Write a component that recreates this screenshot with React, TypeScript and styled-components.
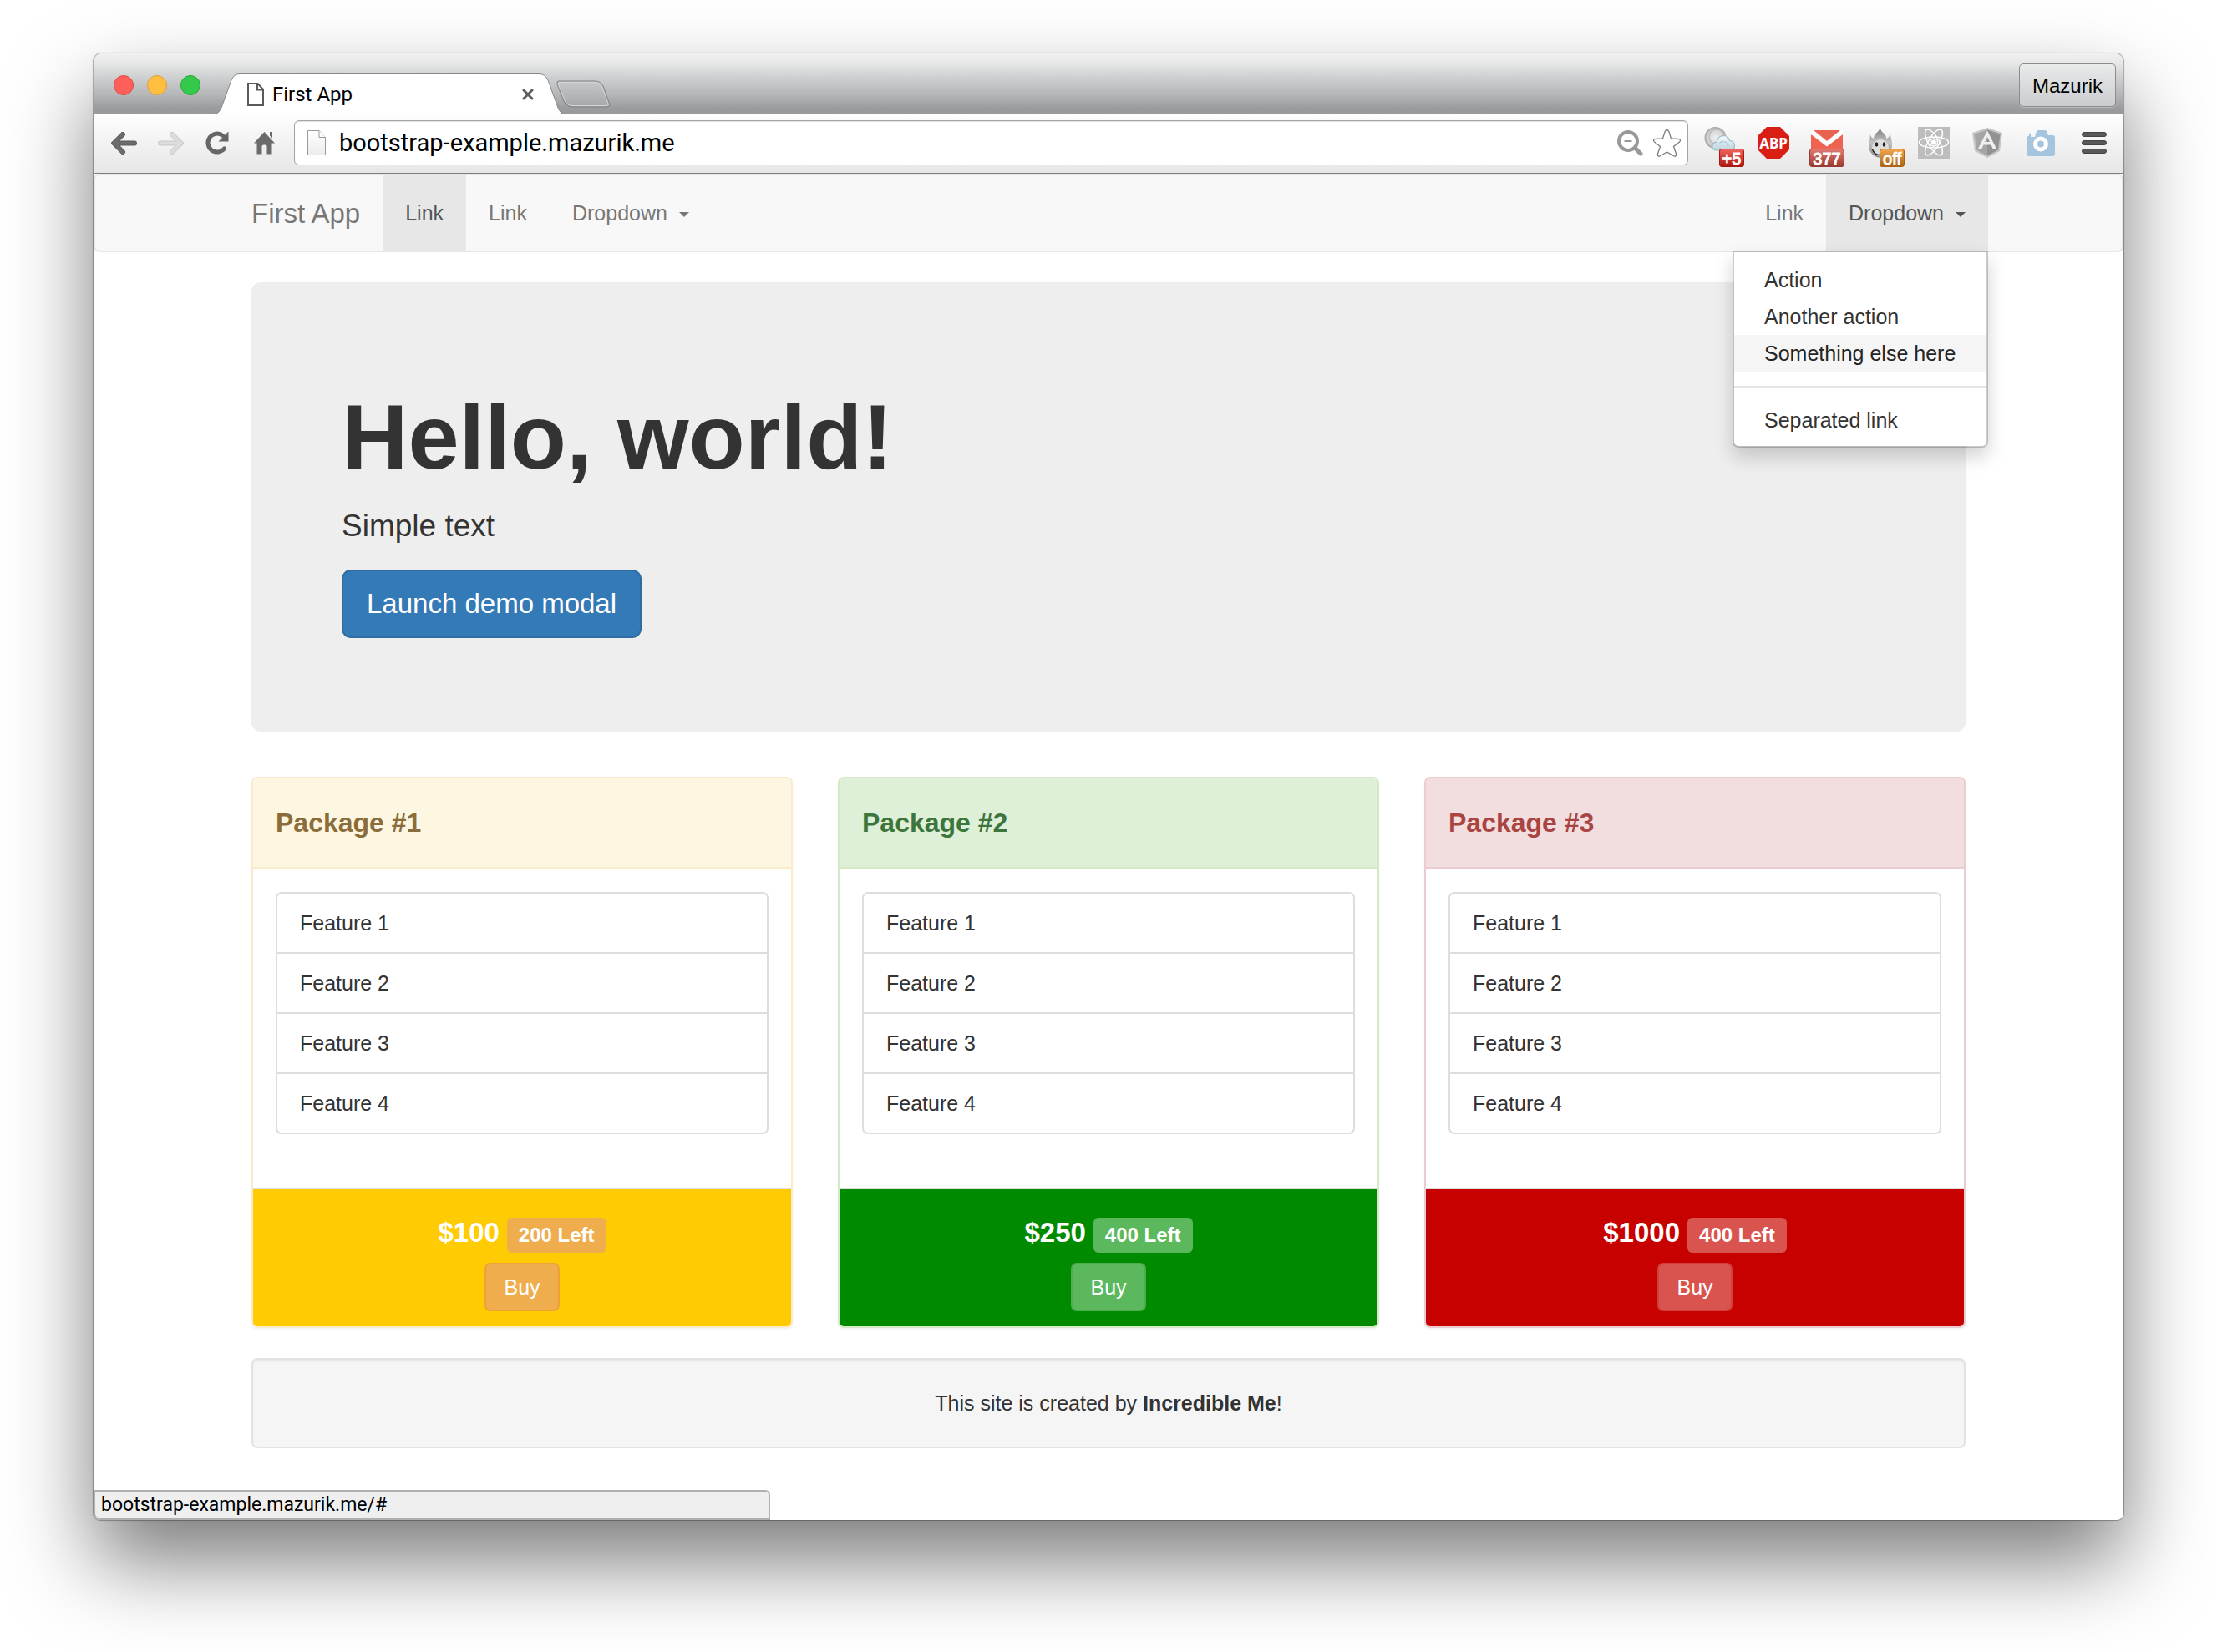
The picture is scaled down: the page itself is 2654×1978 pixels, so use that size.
import React from 'react';
import styled, { createGlobalStyle } from 'styled-components';

const uiFont = 'Roboto, "Noto Sans", sans-serif';
const pageFont = '"Liberation Sans", Arial, sans-serif';

const GlobalStyle = createGlobalStyle`
  *, *::before, *::after { box-sizing: border-box; }
  body { margin: 0; background: #fff; font-family: ${pageFont}; font-size: 25px; line-height: 36px; color: #333; }
  button, input { font: inherit; color: inherit; margin: 0; padding: 0; border: 0; background: none; }
  a { color: inherit; text-decoration: none; }
  ul { list-style: none; margin: 0; padding: 0; }
  svg { display: block; flex: none; }
`;

/* ---------- browser window ---------- */

const Desktop = styled.div`
  display: flex;
  min-height: 100vh;
  padding: 64px 112px 160px;
`;

const Window = styled.div`
  position: relative;
  display: flex;
  flex-direction: column;
  flex: 1;
  min-width: 0;
  border-radius: 10px 10px 8px 8px;
  background: #fff;
  box-shadow: 0 0 1px 1px rgba(0, 0, 0, 0.3), 0 50px 100px rgba(0, 0, 0, 0.52);
`;

const TabStrip = styled.div`
  display: flex;
  align-items: flex-end;
  height: 73px;
  padding: 0 9px 0 24px;
  border-radius: 10px 10px 0 0;
  background: linear-gradient(#f0f0f0 0, #e6e7e7 12px, #c9cbcc 32px, #b4b5b7 50px, #999b9d 66px, #98999b 100%);
`;

const Lights = styled.div`
  display: flex;
  gap: 16px;
  margin: 0 17px 23px 0;
`;

const Light = styled.button<{ $fill: string; $edge: string }>`
  width: 24px;
  height: 24px;
  border: 1px solid ${(p) => p.$edge};
  border-radius: 50%;
  background: ${(p) => p.$fill};
`;

const Tab = styled.div`
  position: relative;
  display: flex;
  align-items: center;
  width: 418px;
  height: 49px;
  padding: 0 36px 0 39px;
  gap: 10px;
  font: 24px/30px ${uiFont};
  color: #000;
`;

const TabShape = styled.svg`
  position: absolute;
  inset: 0;
`;

const TabTitle = styled.span`
  position: relative;
  flex: 1;
`;

const TabPart = styled.span`
  position: relative;
`;

const CloseButton = styled.button`
  position: relative;
`;

const NewTab = styled.button`
  margin: 0 0 8px -9px;
`;

const Profile = styled.button`
  height: 52px;
  margin: 0 0 9px auto;
  padding: 2px 15px 0;
  border: 1px solid #8a8c8e;
  border-radius: 5px;
  background: linear-gradient(#e9eaea, #cbcccf);
  box-shadow: 0 1px 0 rgba(255, 255, 255, 0.3);
  color: #000;
  font-size: 24px;
`;

const Toolbar = styled.div`
  display: flex;
  align-items: center;
  height: 71px;
  padding: 0 20px 2px 8px;
  border-bottom: 1px solid #7c7e80;
  background: linear-gradient(#fefefe, #e6e6e6);
`;

const NavButtons = styled.div`
  display: flex;
  align-items: center;
  margin-right: 8px;
`;

const NavButton = styled.button`
  display: flex;
  justify-content: center;
  width: 56px;
`;

const AddressBar = styled.form`
  display: flex;
  align-items: center;
  flex: 1;
  min-width: 0;
  height: 54px;
  padding: 0 7px 0 15px;
  gap: 11px;
  border: 1px solid #a2a4a6;
  border-radius: 6px;
  background: #fff;
  box-shadow: inset 0 1px 1px rgba(0, 0, 0, 0.12);
`;

const AddressInput = styled.input`
  flex: 1;
  min-width: 0;
  height: 40px;
  padding-left: 5px;
  font: 29px/40px ${uiFont};
  color: #000;
  outline: none;
`;

const Extensions = styled.div`
  display: flex;
  gap: 26px;
  margin: 0 30px 0 19px;
`;

const Extension = styled.button`
  position: relative;
  width: 38px;
  height: 38px;
`;

const Badge = styled.span<{ $wide?: boolean; $top: string; $bottom: string }>`
  position: absolute;
  right: ${(p) => (p.$wide ? '-2px' : '-10px')};
  bottom: -10px;
  width: ${(p) => (p.$wide ? '42px' : '30px')};
  height: 22px;
  border: 1px solid ${(p) => p.$bottom};
  border-radius: 3px;
  background: linear-gradient(${(p) => p.$top}, ${(p) => p.$bottom});
  color: #fff;
  font-size: 20px;
  line-height: 22px;
  text-align: center;
  -webkit-text-stroke: 1px #fff;
`;

const StatusBubble = styled.div`
  position: absolute;
  left: 0;
  bottom: 0;
  width: 810px;
  max-width: 100%;
  height: 36px;
  padding: 0 7px;
  border: 2px solid #b0b0b0;
  border-radius: 0 6px 0 8px;
  background: #efefef;
  font: 23px/32px ${uiFont};
  color: #000;
`;

/* ---------- site ---------- */

const Page = styled.div`
  flex: 1;
  padding-bottom: 86px;
`;

const Container = styled.div`
  max-width: 2106px;
  margin: 0 auto;
  padding: 0 27px;
`;

const Navbar = styled.nav`
  margin-bottom: 36px;
  border: 2px solid #e7e7e7;
  border-radius: 7px;
  background: #f8f8f8;
`;

const NavInner = styled.div`
  display: flex;
  max-width: 2106px;
  margin: 0 auto;
`;

const Brand = styled.a`
  padding: 28px 27px 26px;
  font-size: 33px;
  color: #777;
`;

const NavList = styled.ul<{ $right?: boolean }>`
  display: flex;
  margin-left: ${(p) => (p.$right ? 'auto' : '0')};
`;

const NavItem = styled.li`
  position: relative;
`;

const NavLink = styled.a<{ $active?: boolean }>`
  display: flex;
  align-items: center;
  padding: 27px;
  color: ${(p) => (p.$active ? '#555' : '#777')};
  background: ${(p) => (p.$active ? '#e7e7e7' : 'transparent')};
`;

const Caret = styled.span`
  margin: 4px 0 0 14px;
  border-top: 6px solid;
  border-left: 6px solid transparent;
  border-right: 6px solid transparent;
`;

const Menu = styled.ul`
  position: absolute;
  top: 100%;
  right: 0;
  z-index: 2;
  width: 306px;
  padding: 11px 0 9px;
  border: 2px solid rgba(0, 0, 0, 0.2);
  border-radius: 0 0 7px 7px;
  background: #fff;
  background-clip: padding-box;
  box-shadow: 0 11px 22px rgba(0, 0, 0, 0.175);
`;

const MenuLink = styled.a<{ $hover?: boolean }>`
  display: block;
  padding: 4px 36px;
  white-space: nowrap;
  color: ${(p) => (p.$hover ? '#262626' : '#333')};
  background: ${(p) => (p.$hover ? '#f5f5f5' : 'transparent')};
`;

const Divider = styled.li`
  height: 2px;
  margin: 17px 0;
  background: #e5e5e5;
`;

const Jumbotron = styled.header`
  margin-bottom: 54px;
  padding: 122px 108px 112px;
  border-radius: 11px;
  background: #eee;
`;

const Title = styled.h1`
  margin: 0 0 18px;
  font-size: 110px;
  font-weight: 700;
  line-height: 125px;
`;

const Lead = styled.p`
  margin: 0 0 25px;
  font-size: 37px;
  line-height: 54px;
`;

const PrimaryButton = styled.button`
  height: 82px;
  padding: 0 28px;
  border: 2px solid #2e6da4;
  border-radius: 11px;
  background: #337ab7;
  color: #fff;
  font-size: 33px;
`;

const Columns = styled.div`
  display: grid;
  grid-template-columns: repeat(3, minmax(0, 1fr));
  gap: 54px;
  margin-bottom: 36px;
`;

type Tone = { head: string; edge: string; text: string; foot: string; btn: string; btnEdge: string };

const Panel = styled.section<{ $tone: Tone }>`
  overflow: hidden;
  border: 2px solid ${(p) => p.$tone.edge};
  border-radius: 7px;
  box-shadow: 0 2px 2px rgba(0, 0, 0, 0.05);
`;

const PanelHead = styled.h3<{ $tone: Tone }>`
  margin: 0;
  padding: 35px 27px;
  border-bottom: 2px solid ${(p) => p.$tone.edge};
  background: ${(p) => p.$tone.head};
  color: ${(p) => p.$tone.text};
  font-size: 32px;
  font-weight: 700;
`;

const Features = styled.ul`
  margin: 28px 27px 64px;
  border: 2px solid #ddd;
  border-radius: 7px;
`;

const Feature = styled.li`
  padding: 17px 27px;
  & + & { border-top: 2px solid #ddd; }
`;

const PanelFoot = styled.footer<{ $tone: Tone }>`
  display: flex;
  flex-direction: column;
  align-items: center;
  gap: 12px;
  padding: 34px 27px 18px;
  border-top: 2px solid #ddd;
  background: ${(p) => p.$tone.foot};
  color: #fff;
`;

const PriceRow = styled.div`
  display: flex;
  align-items: baseline;
  gap: 9px;
  height: 42px;
`;

const Price = styled.strong`
  font-size: 33px;
`;

const Stock = styled.span<{ $tone: Tone }>`
  padding: 0 14px;
  border-radius: 6px;
  background: ${(p) => p.$tone.btn};
  font-size: 24px;
  font-weight: 700;
  line-height: 42px;
`;

const BuyButton = styled.button<{ $tone: Tone }>`
  padding: 9px 21px;
  border: 2px solid ${(p) => p.$tone.btnEdge};
  border-radius: 7px;
  background: ${(p) => p.$tone.btn};
`;

const Well = styled.footer`
  padding: 34px;
  border: 2px solid #e3e3e3;
  border-radius: 7px;
  background: #f5f5f5;
  box-shadow: inset 0 2px 2px rgba(0, 0, 0, 0.05);
  text-align: center;
`;

/* ---------- data ---------- */

const packages: { name: string; price: string; left: string; tone: Tone }[] = [
  {
    name: 'Package #1', price: '$100', left: '200 Left',
    tone: { head: '#fdf7e2', edge: '#fbebcc', text: '#8b6d3b', foot: '#ffcb03', btn: '#f0ad4e', btnEdge: '#eea236' },
  },
  {
    name: 'Package #2', price: '$250', left: '400 Left',
    tone: { head: '#dff0d8', edge: '#d6e9c6', text: '#3c763d', foot: '#008a00', btn: '#5cb85c', btnEdge: '#4cae4c' },
  },
  {
    name: 'Package #3', price: '$1000', left: '400 Left',
    tone: { head: '#f2dede', edge: '#ebccd1', text: '#a94442', foot: '#c70000', btn: '#d9534f', btnEdge: '#d43f3a' },
  },
];

const features = ['Feature 1', 'Feature 2', 'Feature 3', 'Feature 4'];

/* ---------- icons ---------- */

const ArrowIcon = ({ flip }: { flip?: boolean }) => (
  <svg width="31" height="27" viewBox="0 0 31 27">
    <g transform={flip ? 'matrix(-1 0 0 1 31 0)' : undefined} fill="none" strokeLinecap="round" strokeLinejoin="miter">
      <path d="M14 3 3.500 13.500 14 24M5 13.500H28" stroke={flip ? '#c9c9c9' : '#5c5c5c'} strokeWidth="6" />
      <path d="M14 3 3.500 13.500 14 24M5 13.500H28" stroke={flip ? '#dcdcdc' : '#6c6c6c'} strokeWidth="4" />
    </g>
  </svg>
);

const ReloadIcon = () => (
  <svg width="28" height="28" viewBox="0 0 28 28">
    <path d="M22.500 21A11 11 0 1 1 20.500 5.200" fill="none" stroke="#666" strokeWidth="5" strokeLinecap="round" />
    <path d="M27.500 .5V12.500H15.500Z" fill="#666" />
  </svg>
);

const HomeIcon = () => (
  <svg width="25" height="28" viewBox="0 0 25 28">
    <path d="M12.500 1 25 14.500H21.500V27.500H15.500V18.500Q15.500 16.500 13.500 16.500H11.500Q9.500 16.500 9.500 18.500V27.500H3.500V14.500H0Z" fill="#6b6b6b" />
    <path d="M19 1H22V8.500L19 5.500Z" fill="#6b6b6b" />
  </svg>
);

const TabFileIcon = () => (
  <svg width="20" height="28" viewBox="0 0 20 28">
    <path d="M1 1H12.500L19 8V27H1Z" fill="#fff" stroke="#5a5a5a" strokeWidth="2" />
    <path d="M12 1V8.500H19" fill="none" stroke="#5a5a5a" strokeWidth="2" />
  </svg>
);

const PageIcon = () => (
  <svg width="22" height="30" viewBox="0 0 22 30">
    <defs>
      <linearGradient id="sheet" x1="0" y1="0" x2="0" y2="1">
        <stop offset="0" stopColor="#fff" />
        <stop offset="1" stopColor="#ececec" />
      </linearGradient>
    </defs>
    <path d="M.5 .5H14L21.500 8.500V29.500H.5Z" fill="url(#sheet)" stroke="#999" />
    <path d="M14 .5V8.500H21.500" fill="#fff" stroke="#999" />
  </svg>
);

const CloseIcon = () => (
  <svg width="14" height="14" viewBox="0 0 14 14">
    <path d="M2 2 12 12M12 2 2 12" stroke="#5f5f5f" strokeWidth="3" strokeLinecap="round" />
  </svg>
);

const NewTabIcon = () => (
  <svg width="65" height="33" viewBox="0 0 65 33">
    <defs>
      <linearGradient id="newtab" x1="0" y1="0" x2="0" y2="1">
        <stop offset="0" stopColor="#c6cacb" />
        <stop offset="1" stopColor="#a5a6a8" />
      </linearGradient>
    </defs>
    <path d="M3 1H46Q53 1 56 7L63.500 28Q65 32 61 32H20Q12 32 9 25L1 5Q0 1 3 1Z" fill="url(#newtab)" stroke="#7e8082" />
    <path d="M4 2.500H46Q52 2.500 54.500 8L62 28Q63 30.500 60 30.500H20Q13 30.500 10.500 25L2.500 5Q2 2.500 4 2.500Z" fill="none" stroke="#d3d5d6" />
  </svg>
);

const MagnifierIcon = () => (
  <svg width="31" height="31" viewBox="0 0 31 31" fill="none" stroke="#999">
    <circle cx="13" cy="13" r="11" strokeWidth="4" />
    <path d="M8.500 13H17.500" strokeWidth="2" />
    <path d="M21.500 21.500 28 28" strokeWidth="5" strokeLinecap="round" />
  </svg>
);

const StarIcon = () => (
  <svg width="35" height="35" viewBox="0 0 35 35">
    <path d="M17.500 1.500Q19 1.500 20 4L22.500 12L31.500 12.500Q35 13.500 32.500 16L25.500 21.500L28.500 30Q29 34 26 33L17.500 28L9 33Q6 34 6.500 30L9.500 21.500L2.500 16Q0 13.500 3.500 12.500L12.500 12L15 4Q16 1.500 17.500 1.500Z" fill="#fff" stroke="#7d7d7d" strokeWidth="1.300" />
  </svg>
);

const WeatherIcon = () => (
  <svg width="38" height="38" viewBox="0 0 38 38">
    <defs>
      <radialGradient id="moon">
        <stop offset="0" stopColor="#f0f0f0" />
        <stop offset=".7" stopColor="#d6d6d6" />
        <stop offset="1" stopColor="#a2a2a2" />
      </radialGradient>
      <linearGradient id="cloud" x1="0" y1="0" x2="0" y2="1">
        <stop offset="0" stopColor="#f6fbfd" />
        <stop offset="1" stopColor="#b9d3de" />
      </linearGradient>
    </defs>
    <circle cx="13.500" cy="13" r="13" fill="url(#moon)" />
    <circle cx="15" cy="12" r="9" fill="none" stroke="#bcbcbc" strokeWidth="1.500" />
    <path d="M15 28Q9 28 10 22.500Q11 18 15 18.500Q16 11 23 10.500Q29 10.500 30.500 16.500Q36 17 36.500 22Q37 28 31 28Z" fill="url(#cloud)" stroke="#9dbccb" strokeWidth="1.200" />
    <path d="M18 21Q20 16 24 18Q29 18 29 23" fill="none" stroke="#b5d0dc" strokeWidth="1.500" />
  </svg>
);

const AbpLabel = styled.text`
  font: 700 17px "Noto Sans", sans-serif;
  fill: #fff;
`;

const AbpIcon = () => (
  <svg width="38" height="38" viewBox="0 0 38 38">
    <path d="M11 0H27L38 11V27L27 38H11L0 27V11Z" fill="#d91f13" />
    <AbpLabel x="19" y="26" textAnchor="middle">ABP</AbpLabel>
  </svg>
);

const MailIcon = () => (
  <svg width="38" height="38" viewBox="0 0 38 38">
    <path d="M0 4H38V34H0Z" fill="#ef6351" />
    <path d="M0 4H38V9L19 23.500 0 9Z" fill="#fff" />
    <path d="M3 4H35L19 17Z" fill="#ea6352" />
  </svg>
);

const FlameIcon = () => (
  <svg width="38" height="38" viewBox="0 0 38 38">
    <defs>
      <linearGradient id="flame" x1="0" y1="0" x2="0" y2="1">
        <stop offset="0" stopColor="#757575" />
        <stop offset=".5" stopColor="#c2c2c2" />
        <stop offset="1" stopColor="#8a8a8a" />
      </linearGradient>
    </defs>
    <path d="M18.500 0Q19 5 23.500 8Q26 11 26.500 14Q29.500 13 31 8Q31 13 33 18Q34 30 26 35Q19 38.500 12 35Q3 29 5.500 18Q7 14 6.500 9Q8 13 11 14Q11 10 14.500 7Q18.500 4 18.500 0Z" fill="url(#flame)" />
    <ellipse cx="19" cy="25" rx="10" ry="10" fill="#dedede" />
    <ellipse cx="14.500" cy="21" rx="1.800" ry="2.800" fill="#222" />
    <ellipse cx="23.500" cy="21" rx="1.800" ry="2.800" fill="#222" />
    <path d="M9.500 27Q12 34 19 33.500" fill="none" stroke="#222" strokeWidth="1.500" />
  </svg>
);

const ReactIcon = () => (
  <svg width="38" height="38" viewBox="0 0 38 38">
    <path d="M0 0H38V38H0Z" fill="#bdbdbd" />
    <g fill="none" stroke="#fff" strokeWidth="1.500">
      <ellipse cx="19" cy="18.500" rx="17.500" ry="6.500" />
      <ellipse cx="19" cy="18.500" rx="17.500" ry="6.500" transform="rotate(60 19 18.500)" />
      <ellipse cx="19" cy="18.500" rx="17.500" ry="6.500" transform="rotate(120 19 18.500)" />
      <circle cx="19" cy="18.500" r="4.500" />
    </g>
    <circle cx="19" cy="18.500" r="3" fill="#fff" />
  </svg>
);

const AngularIcon = () => (
  <svg width="38" height="38" viewBox="0 0 38 38">
    <path d="M19 1 37 7 34 29 19 37 4 29 1 7Z" fill="#c6c6c6" />
    <path d="M19 3.500 34.500 8.500 32 27.500 19 34.500 6 27.500 3.500 8.500Z" fill="#a5a5a5" />
    <path d="M19 3.500 34.500 8.500 32 27.500 19 34.500Z" fill="#929292" />
    <path d="M19 4.500 30.500 27H26L23.500 21.500H14.500L12 27H7.500ZM19 12 16 18H22Z" fill="#eee" fillRule="evenodd" />
  </svg>
);

const CameraIcon = () => (
  <svg width="38" height="38" viewBox="0 0 38 38">
    <path d="M5 8Q6 7 7 8V12H12L14 5Q15 4 16 4H24Q25 4 26 5L28 10H33Q36 10 36 13V32Q36 35 33 35H5Q2 35 2 32V13Q2 11 5 11Z" fill="#a5c4de" />
    <circle cx="19" cy="20.500" r="6.500" fill="none" stroke="#fff" strokeWidth="5" />
  </svg>
);

const MenuIcon = () => (
  <svg width="30" height="26" viewBox="0 0 30 26" fill="#585858" stroke="#444">
    <rect x=".5" y=".5" width="29" height="5" rx="2.500" />
    <rect x=".5" y="10.500" width="29" height="5" rx="2.500" />
    <rect x=".5" y="20.500" width="29" height="5" rx="2.500" />
  </svg>
);

/* ---------- app ---------- */

const Chrome = () => (
  <>
    <TabStrip>
      <Lights>
        <Light aria-label="Close window" $fill="#fd5f5b" $edge="#e2463f" />
        <Light aria-label="Minimize window" $fill="#febe40" $edge="#dfa034" />
        <Light aria-label="Zoom window" $fill="#35c94b" $edge="#24a532" />
      </Lights>
      <Tab>
        <TabShape width="418" height="49" viewBox="0 0 418 49">
          <path d="M0 49Q5 48 8 41L20 8Q23 .5 30 .5H388Q396 .5 399 8L411 41Q414 48 418 49Z" fill="#fff" />
          <path d="M0 48.500Q5 48 8 41L20 8Q23 .5 30 .5H388Q396 .5 399 8L411 41Q414 48 418 48.500" fill="none" stroke="#85878a" />
        </TabShape>
        <TabPart><TabFileIcon /></TabPart>
        <TabTitle>First App</TabTitle>
        <CloseButton aria-label="Close tab"><CloseIcon /></CloseButton>
      </Tab>
      <NewTab aria-label="New tab"><NewTabIcon /></NewTab>
      <Profile>Mazurik</Profile>
    </TabStrip>
    <Toolbar>
      <NavButtons>
        <NavButton aria-label="Back"><ArrowIcon /></NavButton>
        <NavButton aria-label="Forward"><ArrowIcon flip /></NavButton>
        <NavButton aria-label="Reload"><ReloadIcon /></NavButton>
        <NavButton aria-label="Home"><HomeIcon /></NavButton>
      </NavButtons>
      <AddressBar onSubmit={(e) => e.preventDefault()}>
        <PageIcon />
        <AddressInput aria-label="Address" defaultValue="bootstrap-example.mazurik.me" spellCheck={false} />
        <button type="button" aria-label="Zoom"><MagnifierIcon /></button>
        <button type="button" aria-label="Bookmark"><StarIcon /></button>
      </AddressBar>
      <Extensions>
        <Extension aria-label="Weather"><WeatherIcon /><Badge $top="#f0625c" $bottom="#ad1712">+5</Badge></Extension>
        <Extension aria-label="Adblock"><AbpIcon /></Extension>
        <Extension aria-label="Mail"><MailIcon /><Badge $wide $top="#e07a72" $bottom="#9a3a33">377</Badge></Extension>
        <Extension aria-label="Proxy"><FlameIcon /><Badge $top="#efa54e" $bottom="#ad6412">off</Badge></Extension>
        <Extension aria-label="React tools"><ReactIcon /></Extension>
        <Extension aria-label="Angular tools"><AngularIcon /></Extension>
        <Extension aria-label="Screenshot"><CameraIcon /></Extension>
      </Extensions>
      <button aria-label="Menu"><MenuIcon /></button>
    </Toolbar>
  </>
);

const SiteNav = () => (
  <Navbar>
    <NavInner>
      <Brand href="#">First App</Brand>
      <NavList>
        <NavItem><NavLink href="#" $active>Link</NavLink></NavItem>
        <NavItem><NavLink href="#">Link</NavLink></NavItem>
        <NavItem><NavLink as="button">Dropdown<Caret /></NavLink></NavItem>
      </NavList>
      <NavList $right>
        <NavItem><NavLink href="#">Link</NavLink></NavItem>
        <NavItem>
          <NavLink as="button" $active aria-expanded="true">Dropdown<Caret /></NavLink>
          <Menu>
            <li><MenuLink href="#">Action</MenuLink></li>
            <li><MenuLink href="#">Another action</MenuLink></li>
            <li><MenuLink href="#" $hover>Something else here</MenuLink></li>
            <Divider role="separator" />
            <li><MenuLink href="#">Separated link</MenuLink></li>
          </Menu>
        </NavItem>
      </NavList>
    </NavInner>
  </Navbar>
);

export default function App() {
  return (
    <>
      <GlobalStyle />
      <Desktop>
        <Window>
          <Chrome />
          <Page>
            <SiteNav />
            <Container>
              <Jumbotron>
                <Title>Hello, world!</Title>
                <Lead>Simple text</Lead>
                <PrimaryButton>Launch demo modal</PrimaryButton>
              </Jumbotron>
              <Columns>
                {packages.map(({ name, price, left, tone }) => (
                  <Panel key={name} $tone={tone}>
                    <PanelHead $tone={tone}>{name}</PanelHead>
                    <Features>
                      {features.map((f) => <Feature key={f}>{f}</Feature>)}
                    </Features>
                    <PanelFoot $tone={tone}>
                      <PriceRow>
                        <Price>{price}</Price>
                        <Stock $tone={tone}>{left}</Stock>
                      </PriceRow>
                      <BuyButton $tone={tone}>Buy</BuyButton>
                    </PanelFoot>
                  </Panel>
                ))}
              </Columns>
              <Well>This site is created by <strong>Incredible Me</strong>!</Well>
            </Container>
          </Page>
          <StatusBubble>bootstrap-example.mazurik.me/#</StatusBubble>
        </Window>
      </Desktop>
    </>
  );
}
